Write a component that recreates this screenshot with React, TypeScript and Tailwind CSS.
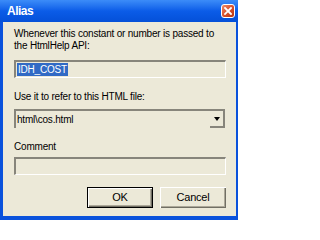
import React from "react";

function CloseButton() {
  return (
    <div className="w-[14px] h-[14px] rounded-[3px] border border-white bg-gradient-to-br from-[#ec8a68] via-[#d9512c] to-[#b6360f] flex items-center justify-center">
      <svg width="8" height="8" viewBox="0 0 8 8">
        <path d="M1 1 L7 7 M7 1 L1 7" stroke="#fff" strokeWidth="1.8" strokeLinecap="square" />
      </svg>
    </div>
  );
}

function Sunken({ children, className = "" }: { children?: React.ReactNode; className?: string }) {
  return (
    <div
      className={
        "border-t-2 border-l-2 border-t-[#87857b] border-l-[#87857b] border-b border-r border-b-white border-r-white bg-[#ece9d8] " +
        className
      }
    >
      {children}
    </div>
  );
}

export default function App() {
  return (
    <div className="w-[238px] h-[220px] bg-[#0a52dc] flex flex-col font-['Liberation_Sans',Arial,sans-serif] text-black overflow-hidden">
      {/* title bar */}
      <div className="h-[22px] shrink-0 flex items-center justify-between pl-[7px] pr-[3px] bg-gradient-to-b from-[#3c8cf8] via-[#0b5ce8] to-[#0550d8]">
        <span className="text-white font-bold text-[12px] tracking-[-0.5px] leading-none">Alias</span>
        <CloseButton />
      </div>

      {/* body */}
      <div className="flex-1 ml-[3px] mr-[2px] mb-[4px] bg-[#ece9d8] pl-[11px] pr-[10px] pt-[6px] text-[10px] leading-[12px] tracking-[-0.2px]">
        <p>
          Whenever this constant or number is passed to
          <br />
          the HtmlHelp API:
        </p>

        <Sunken className="mt-[8px] h-[18px] flex items-center pl-[1px]">
          <span className="bg-[#316ac5] text-white px-[1px] leading-[13px]">IDH_COST</span>
        </Sunken>

        <p className="mt-[13px]">Use it to refer to this HTML file:</p>

        <div className="mt-[6px] h-[19px] flex border-t-2 border-l-2 border-[#87857b] mr-[1px]">
          <div className="flex-1 flex items-center pl-[1px]">html\cos.html</div>
          <div className="w-[15px] flex items-center justify-center border-r-2 border-b-2 border-[#87857b]">
            <svg width="6" height="4" viewBox="0 0 6 4">
              <path d="M0 0 H6 L3 4 Z" fill="#000" />
            </svg>
          </div>
        </div>

        <p className="mt-[13px]">Comment</p>

        <Sunken className="mt-[4px] h-[18px]" />

        <div className="mt-[12px] flex justify-end gap-[7px]">
          <button className="w-[66px] h-[21px] border border-black bg-[#ece9d8] shadow-[inset_1px_1px_0_#fff,inset_-1px_-1px_0_#716f64,inset_-2px_-2px_0_#aca899] text-[11px] leading-none">
            OK
          </button>
          <button className="w-[66px] h-[21px] bg-[#ece9d8] shadow-[inset_1px_1px_0_#fff,inset_-1px_-1px_0_#716f64,inset_-2px_-2px_0_#aca899] text-[11px] leading-none">
            Cancel
          </button>
        </div>
      </div>
    </div>
  );
}
